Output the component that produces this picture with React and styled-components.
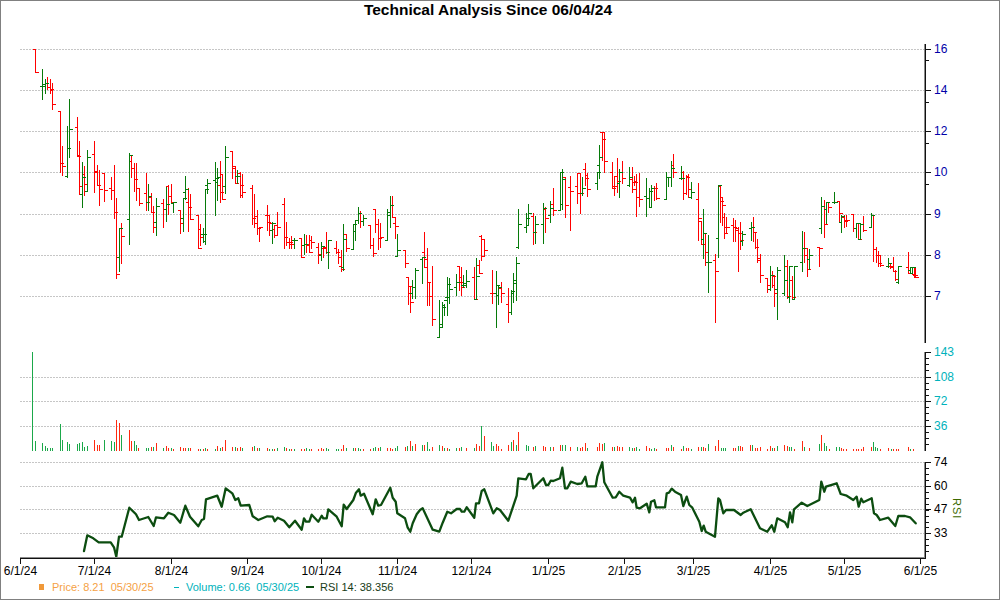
import React from 'react';
import styled, { createGlobalStyle } from 'styled-components';

const GlobalStyle = createGlobalStyle`
  html, body { margin: 0; padding: 0; background: #fff; }
  body { font-family: "Liberation Sans", Arial, sans-serif; }
`;

const Frame = styled.div`
  box-sizing: border-box;
  width: 1000px;
  height: 600px;
  border: 1px solid #808080;
  background: #fff;
  display: flex;
  flex-direction: column;
  overflow: hidden;
`;

const Title = styled.h1`
  margin: 0;
  height: 18px;
  line-height: 17px;
  padding-right: 24px;
  text-align: center;
  font-size: 15.5px;
  font-weight: 700;
  color: #000;
  flex: none;
`;

const Chart = styled.svg`
  display: block;
  flex: none;
  width: 998px;
  height: 561px;
`;

const Legend = styled.div`
  flex: 1;
  display: flex;
  align-items: center;
  padding: 0 0 5px 38px;
  font-size: 11px;
  white-space: pre;
`;

const LegendItem = styled.div`
  display: flex;
  align-items: center;
  gap: ${p => p.$gap}px;
  width: ${p => p.$width}px;
  color: ${p => p.$color};
`;

const LegendMark = styled.span`
  display: block;
  flex: none;
  width: ${p => p.$w}px;
  height: ${p => p.$h}px;
  background: ${p => p.$color};
`;

const Grid = styled.line`
  stroke: #c6c6c6;
  stroke-width: 1;
  stroke-dasharray: 2 1;
  shape-rendering: crispEdges;
`;

const Stroke = styled.path`
  fill: none;
  stroke: ${p => p.$color};
  stroke-width: ${p => p.$w || 1};
  shape-rendering: crispEdges;
`;

const RsiLine = styled.polyline`
  fill: none;
  stroke: #0c4d10;
  stroke-width: 2.3;
  stroke-linejoin: round;
  stroke-linecap: round;
`;

const Label = styled.text`
  font-family: "Liberation Sans", Arial, sans-serif;
  font-size: 12px;
  fill: ${p => p.$color};
  text-anchor: ${p => p.$anchor || 'start'};
`;

const SideTitle = styled.text`
  font-family: "Liberation Sans", Arial, sans-serif;
  font-size: 11px;
  letter-spacing: 1px;
  fill: #3c6a00;
`;

const RED = [
[35,49,72,49,72],[47,77,89,83,87],[50,79,93,87,89],[52,83,109,90,104],[60,111,172,111,163],[62,146,175,163,166],[77,117,156,127,156],[79,141,194,155,186],[84,166,195,174,184],[94,141,192,154,171],[97,165,185,172,185],[99,170,205,185,189],[104,173,201,173,190],[111,177,199,188,190],[114,165,218,190,212],[116,198,278,212,274],[121,223,263,228,236],[131,155,177,161,168],[134,163,191,168,179],[136,163,200,179,188],[139,188,205,188,203],[146,173,210,193,202],[151,193,212,197,212],[153,206,232,212,227],[163,199,227,203,209],[168,185,214,186,196],[171,184,203,196,202],[180,210,233,210,223],[188,188,231,202,207],[190,194,219,207,219],[198,215,248,215,248],[200,224,245,229,237],[220,161,202,185,192],[222,174,199,174,199],[232,151,178,151,166],[235,166,183,168,183],[240,172,197,173,185],[242,174,197,195,192],
[252,185,224,188,218],[254,194,227,218,223],[257,210,234,216,228],[259,227,241,228,227],[267,205,230,215,222],[269,215,235,215,223],[274,225,237,229,235],[277,212,235,225,227],[284,198,248,204,237],[286,222,245,237,242],[289,238,248,242,242],[291,236,248,244,244],[301,238,257,238,257],[306,235,252,244,244],[309,235,252,245,252],[311,236,248,240,242],[318,243,263,247,254],[323,246,257,248,248],[326,232,253,247,252],[336,241,253,248,252],[338,249,263,252,257],[341,250,271,266,269],[346,234,251,234,248],[360,211,227,213,221],[370,225,248,225,245],[373,238,256,245,253],[375,209,232,209,224],[378,219,249,224,238],[380,223,247,238,237],[392,196,217,205,217],[395,218,238,223,226],[405,250,267,250,263],[408,277,304,277,286],[410,286,312,293,302],[424,232,267,252,259],[427,248,305,267,282],[429,282,305,282,296],[432,266,325,296,319],[459,266,290,266,282],[461,267,295,277,287],[474,267,299,277,299],[479,260,273,265,273],[481,235,260,236,256],[484,239,256,239,250],[492,270,303,293,293],
[501,282,302,288,293],[508,288,322,304,312],[533,213,244,216,232],[545,207,232,209,218],[553,188,215,204,210],[565,177,217,177,205],[570,176,230,187,191],[577,173,203,186,193],[580,173,213,173,193],[585,163,185,169,178],[587,173,196,175,189],[602,132,160,132,139],[604,132,172,132,161],[612,162,188,172,188],[614,176,195,186,186],[617,158,192,176,181],[622,161,183,172,178],[632,167,192,179,189],[634,176,185,182,182],[636,174,216,181,197],[639,173,206,197,199],[654,186,200,188,188],[656,183,199,188,198],[673,154,177,165,172],[683,171,199,172,193],[686,175,194,193,177],[688,174,197,176,189],[698,183,240,199,218],[701,221,244,221,244],[705,233,265,233,252],[715,254,322,260,271],[720,185,222,186,201],[722,197,225,197,205],[724,213,238,217,233],[726,217,232,227,227],[733,218,241,225,227],[735,220,241,227,230],[738,227,271,228,233],[740,222,249,233,240],
[753,217,241,227,232],[755,232,248,232,247],[757,239,262,247,258],[760,254,282,260,275],[767,278,292,278,285],[772,271,287,275,276],[774,275,306,285,293],[787,260,298,266,296],[792,276,299,280,297],[804,232,262,248,255],[807,248,276,248,269],[819,247,266,247,248],[824,200,237,206,224],[828,202,212,202,207],[839,201,222,201,213],[844,215,227,217,221],[846,215,226,220,220],[853,214,231,214,228],[858,223,239,223,239],[863,216,231,224,230],[873,215,261,215,249],[876,247,262,249,255],[878,251,266,255,263],[880,255,266,263,265],[890,263,268,266,267],[893,257,271,266,271],[895,270,280,271,279],[908,252,273,267,273],[914,268,277,274,275],[915,268,277,275,277],
];

const GREEN = [
[42,69,99,86,84],[45,79,93,86,83],[67,126,177,176,148],[69,99,157,148,129],[82,162,207,194,177],[87,150,191,191,157],[119,228,271,257,228],[129,153,244,219,155],[148,184,210,202,196],[156,198,235,222,206],[166,187,221,209,204],[173,202,212,203,202],[183,198,231,218,198],[185,176,199,192,189],[203,228,242,234,234],[205,189,244,241,189],[207,179,193,185,183],[215,162,215,180,178],[217,168,200,182,177],[225,146,193,186,157],[237,170,183,176,176],[272,222,243,230,223],[294,238,248,240,240],[304,234,254,245,244],[321,242,260,255,246],[328,240,268,252,240],[343,224,270,267,239],[353,224,249,249,224],[355,220,240,231,220],[358,207,223,220,213],[363,215,225,221,218],[387,209,240,240,212],[390,196,227,215,205],[397,234,256,256,250],[412,280,298,293,287],[415,268,298,287,270],[422,257,283,259,257],[439,300,337,337,324],[442,302,327,327,307],[444,304,315,305,300],[447,277,315,297,284],[449,278,303,297,289],[456,274,295,287,282],[463,275,287,285,283],[466,270,287,285,281],[476,258,299,299,276],[496,271,327,293,285],[498,285,304,295,287],[511,290,314,312,291],[513,273,302,293,283],[516,257,300,280,263],[518,209,248,247,224],[526,213,232,227,218],[528,204,224,225,213],[535,216,243,232,224],[543,203,243,224,208],[550,201,222,215,208],[560,172,210,210,172],[562,169,209,204,179],[582,177,195,193,188],[597,172,189,183,172],[599,145,178,165,157],[619,169,197,183,172],[629,167,186,185,177],[646,178,216,196,198],[649,188,207,198,191],[651,185,207,207,188],[666,172,199,199,177],[668,177,186,177,177],[671,161,186,177,168],[681,166,179,178,178],[691,182,198,197,192],[703,209,258,239,233],[708,235,292,262,262],[718,185,257,238,185],[742,231,245,241,234],[751,222,240,228,227],[770,266,290,289,275],[777,267,319,289,270],[784,255,295,293,280],[789,266,302,297,266],[794,266,299,299,266],[802,231,271,262,248],[809,249,269,259,255],[821,197,233,228,206],[826,202,223,209,202],[834,192,203,202,202],[841,215,232,222,216],[856,223,237,228,223],[860,223,239,239,224],[871,213,227,227,215],[888,258,267,266,263],[898,266,283,282,266],[910,267,273,270,267],[912,267,273,273,267],
];

const VOL_GREEN = [
[32,99],[35,10],[42,8],[45,5],[47,3],[50,3],[52,3],[60,27],[62,11],[67,9],[69,7],[77,7],[79,8],[82,9],[84,4],[87,5],[104,11],[111,10],[114,9],[121,16],[134,10],[136,6],[146,3],[148,3],[153,4],[163,3],[171,3],[188,3],[200,2],[205,3],[215,2],[220,3],[235,4],[242,3],
[254,5],[259,3],[269,2],[272,2],[277,3],[284,4],[289,2],[294,2],[306,3],[309,2],[326,3],[328,2],[336,2],[338,2],[346,3],[353,3],[358,3],[360,2],[373,3],[375,4],[380,4],[395,3],[397,5],[407,5],[412,5],[422,6],[427,9],[429,2],[439,6],[444,3],[449,2],[456,3],[461,4],[474,3],[481,25],[491,9],[493,5],[511,9],[516,6],[526,6],[528,5],[535,5],[550,4],[562,6],[565,6],[577,4],[587,3],[604,8],[614,4],[629,4],[632,3],[636,4],[639,2],[651,2],[654,3],[671,6],[683,5],[691,2],[701,4],[708,7],
[721,3],[723,3],[725,3],[738,5],[752,6],[772,3],[777,5],[789,4],[791,4],[804,4],[819,7],[824,8],[826,5],[836,4],[839,4],[873,9],[875,4],[877,3],[891,2],[910,2],
];

const VOL_RED = [
[94,11],[97,6],[99,6],[116,31],[119,28],[129,21],[131,10],[138,3],[151,4],[156,8],[166,5],[168,3],[173,2],[180,4],[183,3],[185,3],[190,3],[198,2],[203,2],[207,2],[217,5],[222,4],[225,11],[232,4],[237,3],[240,4],
[252,4],[257,3],[267,3],[274,2],[286,3],[291,2],[301,2],[304,2],[311,2],[318,2],[321,3],[323,2],[341,2],[343,6],[355,3],[363,2],[370,2],[378,3],[387,3],[390,3],[392,2],[405,4],[410,10],[415,7],[424,6],[432,4],[442,5],[447,3],[459,3],[466,3],[476,7],[479,5],[484,15],[496,7],[498,5],[501,2],[508,6],[513,11],[518,19],[533,4],[543,5],[545,4],[553,4],[560,6],[570,4],[580,3],[582,4],[585,8],[597,4],[599,8],[602,7],[612,4],[617,5],[619,4],[622,4],[634,3],[646,5],[649,3],[656,2],[666,3],[668,3],[673,4],[681,2],[686,3],[688,3],[698,4],[703,4],[705,3],[715,5],[718,11],
[733,3],[735,3],[740,5],[742,4],[750,6],[755,3],[757,3],[760,4],[767,2],[770,5],[774,3],[784,6],[787,5],[794,2],[802,10],[809,3],[821,16],[829,2],[841,3],[843,2],[846,2],[853,2],[856,2],[858,2],[861,2],[863,4],[871,4],[880,2],[888,3],[893,2],[896,2],[898,2],[908,4],[913,2],
];

const RSI_A = [[252,288],[262,241],[280,250],[296,262],[332,262],[342,277],[349,305],[357,245],[365,245],[388,158],[408,178],[417,195],[445,186],[461,213],[468,187],[492,190],[505,173],[522,180],[541,203],[556,152],[570,185],[595,214],[605,195],[612,192],[618,133],[652,122],[665,155],[677,100],[697,115],[706,135],[715,130],[722,152],[748,150],[758,184],[775,195],[802,184],[818,185],[824,199],[833,188],[852,197],[868,217],[885,197],[905,224],[912,190],[918,200],[928,200],[935,179],[955,200],[965,182],[970,190],[980,190],[985,163],[1010,185],[1025,214],[1031,149],[1040,162],[1060,135],[1068,113],[1077,103],[1082,122],[1092,116],[1118,178],[1127,133],[1135,152],[1143,150],[1171,98],[1178,128],[1187,140],[1192,175],[1215,190],[1223,218],[1231,230],[1238,205],[1250,178],[1260,165]];
const RSI_B = [[8,160],[38,224],[58,230],[68,203],[82,170],[93,175],[110,162],[120,162],[125,170],[133,170],[140,157],[163,188],[168,145],[177,145],[185,108],[193,103],[220,175],[230,160],[240,165],[265,197],[290,122],[295,70],[318,73],[326,57],[332,57],[340,100],[370,70],[378,90],[385,90],[392,77],[400,78],[420,70],[427,38],[435,100],[442,100],[452,80],[472,87],[485,85],[496,65],[502,94],[527,94],[532,65],[547,22],[553,82],[578,128],[587,127],[598,110],[610,122],[630,128],[638,142],[645,128],[650,158],[660,160],[680,146],[688,172],[693,140],[703,136],[708,157],[735,157],[740,115],[747,113],[755,101],[765,110],[783,120],[790,153],[800,125],[808,150],[817,158],[838,200],[845,228],[851,212],[857,230],[885,245],[895,130]];
const RSI_C = [[0,480],[10,520],[18,510],[42,510],[62,525],[70,518],[92,508],[120,565],[142,575],[155,556],[163,575],[172,535],[195,547],[203,562],[210,517],[217,547],[222,508],[245,488],[262,498],[298,480],[304,425],[313,455],[318,440],[350,430],[362,462],[380,467],[400,480],[410,470],[416,500],[424,476],[430,487],[455,475],[462,520],[470,525],[480,540],[505,533],[526,558],[535,528],[555,528],[570,532],[587,550]];

const rsiPoints = [
  ...RSI_A.map(([x, y]) => [x / 3, 455 + y / 3]),
  ...RSI_B.map(([x, y]) => [420 + x / 3, 455 + y / 3]),
  ...RSI_C.map(([x, y]) => [720 + x / 3, 340 + y / 3]),
].map(([x, y]) => `${x.toFixed(1)},${y.toFixed(1)}`).join(' ');

const barsPath = bars => bars.map(([x, hi, lo, o, c]) => {
  const cx = x + 0.5;
  return `M${cx} ${hi}V${lo + 1}M${x - 2} ${o + 0.5}H${x + 1}M${x} ${c + 0.5}H${x + 4}`;
}).join('');

const volPath = vols => vols.map(([x, h]) => `M${x + 0.5} 451V${451 - h}`).join('');

const PRICE = [[16, 49], [14, 90], [12, 131], [10, 172], [9, 214], [8, 255], [7, 296]];
const VOLUME = [[143, 352], [108, 377], [72, 401], [36, 426]];
const RSI = [[74, 462], [60, 486], [47, 509], [33, 533]];
const DATES = [['6/1/24', 20.5], ['7/1/24', 94.5], ['8/1/24', 171.5], ['9/1/24', 247.5], ['10/1/24', 321.5], ['11/1/24', 397.5], ['12/1/24', 471.5], ['1/1/25', 548.5], ['2/1/25', 624.5], ['3/1/25', 693.5], ['4/1/25', 770.5], ['5/1/25', 844.5], ['6/1/25', 920.5]];

const range = (from, to, step) => {
  const out = [];
  for (let y = from; y <= to; y += step) out.push(Math.round(y));
  return out;
};

const ticks = (ys, len) => ys.map(y => `M926 ${y + 0.5}H${926 + len}`).join('');

const axisMajor = ticks([...PRICE, ...VOLUME, ...RSI].map(r => r[1]), 5);
const axisMinor = ticks([60, 102, 143, 184, ...range(352, 449, 6.15), ...range(462, 556, 5.95)], 3);
const dateTicks = DATES.map(([, x]) => `M${x} 559V564`).join('');

export default function App() {
  return (
    <>
      <GlobalStyle />
      <Frame>
        <Title>Technical Analysis Since 06/04/24</Title>
        <Chart viewBox="1 19 998 561">
          {[...PRICE, ...VOLUME.slice(1), ...RSI].map(([, y]) => (
            <Grid key={y} x1="20" x2="924" y1={y + 0.5} y2={y + 0.5} />
          ))}
          <Stroke $color="#ff0000" d={barsPath(RED)} />
          <Stroke $color="#067a0a" d={barsPath(GREEN)} />
          <Stroke $color="#1ba84a" d={volPath(VOL_GREEN)} />
          <Stroke $color="#ff2a10" d={volPath(VOL_RED)} />
          <RsiLine points={rsiPoints} />

          <Stroke $color="#8a8a8a" d="M924.5 44V343M924.5 352V451M924.5 462V558M20 557.5H924" />
          <Stroke $color="#111" $w={1.5} d="M925.5 44V343M925.5 352V451M925.5 462V559M20 558.5H926" />
          <Stroke $color="#111" d={axisMajor + axisMinor + dateTicks} />

          {PRICE.map(([v, y]) => <Label key={v} $color="#0000a8" x="934" y={y + 4}>{v}</Label>)}
          {VOLUME.map(([v, y]) => <Label key={v} $color="#00b2bb" x="934" y={y + 4}>{v}</Label>)}
          {RSI.map(([v, y]) => <Label key={v} $color="#000" x="934" y={y + 4}>{v}</Label>)}
          {DATES.map(([t, x]) => <Label key={t} $color="#000" $anchor="middle" x={x} y="575">{t}</Label>)}
          <SideTitle transform="translate(953 498) rotate(90)">RSI</SideTitle>
        </Chart>
        <Legend>
          <LegendItem $gap={8} $width={135} $color="#f5a145">
            <LegendMark $w={5} $h={6} $color="#f0993a" />
            {'Price: 8.21  05/30/25'}
          </LegendItem>
          <LegendItem $gap={7} $width={132} $color="#00b2bb">
            <LegendMark $w={5} $h={1} $color="#00b2bb" />
            {'Volume: 0.66  05/30/25'}
          </LegendItem>
          <LegendItem $gap={6} $width={100} $color="#173c17">
            <LegendMark $w={8} $h={2} $color="#0c4d10" />
            {'RSI 14: 38.356'}
          </LegendItem>
        </Legend>
      </Frame>
    </>
  );
}
